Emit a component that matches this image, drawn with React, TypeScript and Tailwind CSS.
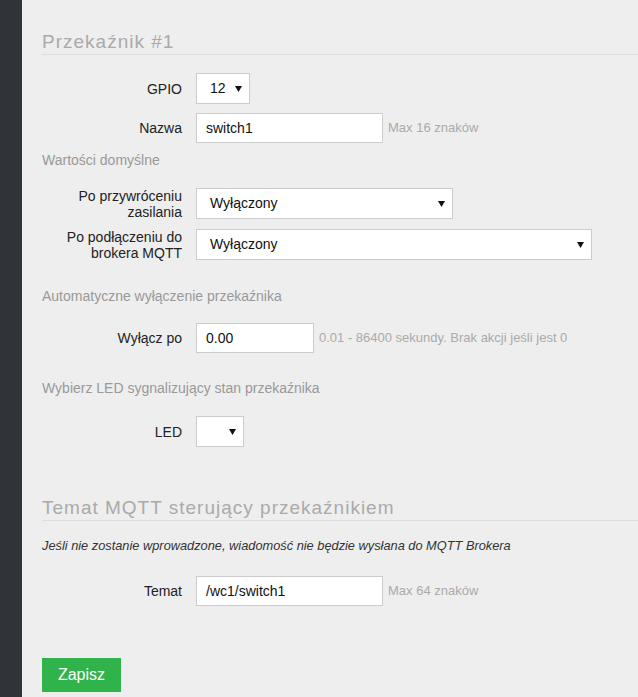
import React from "react";

const Arrow = () => (
  <svg width="7" height="7" viewBox="0 0 7 7" className="shrink-0">
    <polygon points="0,1 7,1 3.5,7" fill="#111" />
  </svg>
);

const Select = ({ value, w, h = "h-[31px]" }: { value: string; w: string; h?: string }) => (
  <div className={`${w} ${h} bg-white border border-[#cccccc] flex items-center justify-between pl-[13px] pr-[7px] text-[14px] text-[#111]`}>
    <span>{value}</span>
    <Arrow />
  </div>
);

const Input = ({ value, w }: { value: string; w: string }) => (
  <div className={`${w} h-[30px] bg-white border border-[#cccccc] flex items-center pl-[9px] text-[14px] text-[#111]`}>
    {value}
  </div>
);

const Label = ({ children }: { children: React.ReactNode }) => (
  <div className="w-[140px] text-right text-[14px] leading-[16px] text-[#222] shrink-0">{children}</div>
);

const Help = ({ children }: { children: React.ReactNode }) => (
  <span className="ml-[5px] text-[13px] text-[#aaaaaa]">{children}</span>
);

export default function App() {
  return (
    <div
      className="flex min-h-[697px] bg-[#eeeeee]"
      style={{ fontFamily: '"Liberation Sans", Arial, sans-serif' }}
    >
      <div className="w-[22px] bg-[#303439] shrink-0" />
      <div className="flex-1 pl-[20px] pt-[31px] pb-[5px]">
        <h2 className="text-[19px] leading-[22px] tracking-[1px] text-[#aaaaaa] pb-[1px] border-b border-[#dddddd] font-normal">
          Przekaźnik #1
        </h2>

        <div className="mt-[18px] flex items-center gap-[14px]">
          <Label>GPIO</Label>
          <Select value="12" w="w-[54px]" />
        </div>

        <div className="mt-[9px] flex items-center gap-[14px]">
          <Label>Nazwa</Label>
          <div className="flex items-center">
            <Input value="switch1" w="w-[187px]" />
            <Help>Max 16 znaków</Help>
          </div>
        </div>

        <div className="mt-[7px] text-[14px] leading-[20px] text-[#999999]">Wartości domyślne</div>

        <div className="mt-[18px] h-[31px] flex items-center gap-[14px]">
          <Label>
            Po przywróceniu
            <br />
            zasilania
          </Label>
          <Select value="Wyłączony" w="w-[257px]" />
        </div>

        <div className="mt-[10px] h-[31px] flex items-center gap-[14px]">
          <Label>
            Po podłączeniu do
            <br />
            brokera MQTT
          </Label>
          <Select value="Wyłączony" w="w-[396px]" />
        </div>

        <div className="mt-[26px] text-[14px] leading-[20px] text-[#999999]">
          Automatyczne wyłączenie przekaźnika
        </div>

        <div className="mt-[17px] flex items-center gap-[14px]">
          <Label>Wyłącz po</Label>
          <div className="flex items-center">
            <Input value="0.00" w="w-[118px]" />
            <Help>0.01 - 86400 sekundy. Brak akcji jeśli jest 0</Help>
          </div>
        </div>

        <div className="mt-[25px] text-[14px] leading-[20px] text-[#999999]">
          Wybierz LED sygnalizujący stan przekaźnika
        </div>

        <div className="mt-[18px] flex items-center gap-[14px]">
          <Label>LED</Label>
          <Select value="" w="w-[48px]" />
        </div>

        <h2 className="mt-[50px] text-[19px] leading-[22px] tracking-[1px] text-[#aaaaaa] pb-[1px] border-b border-[#dddddd] font-normal">
          Temat MQTT sterujący przekaźnikiem
        </h2>

        <div className="mt-[16px] text-[12.8px] leading-[18px] italic text-[#333333]">
          Jeśli nie zostanie wprowadzone, wiadomość nie będzie wysłana do MQTT Brokera
        </div>

        <div className="mt-[21px] flex items-center gap-[14px]">
          <Label>Temat</Label>
          <div className="flex items-center">
            <Input value="/wc1/switch1" w="w-[187px]" />
            <Help>Max 64 znaków</Help>
          </div>
        </div>

        <button className="mt-[52px] h-[34px] w-[79px] bg-[#30b34a] text-white text-[16px] flex items-center justify-center">
          Zapisz
        </button>
      </div>
    </div>
  );
}
